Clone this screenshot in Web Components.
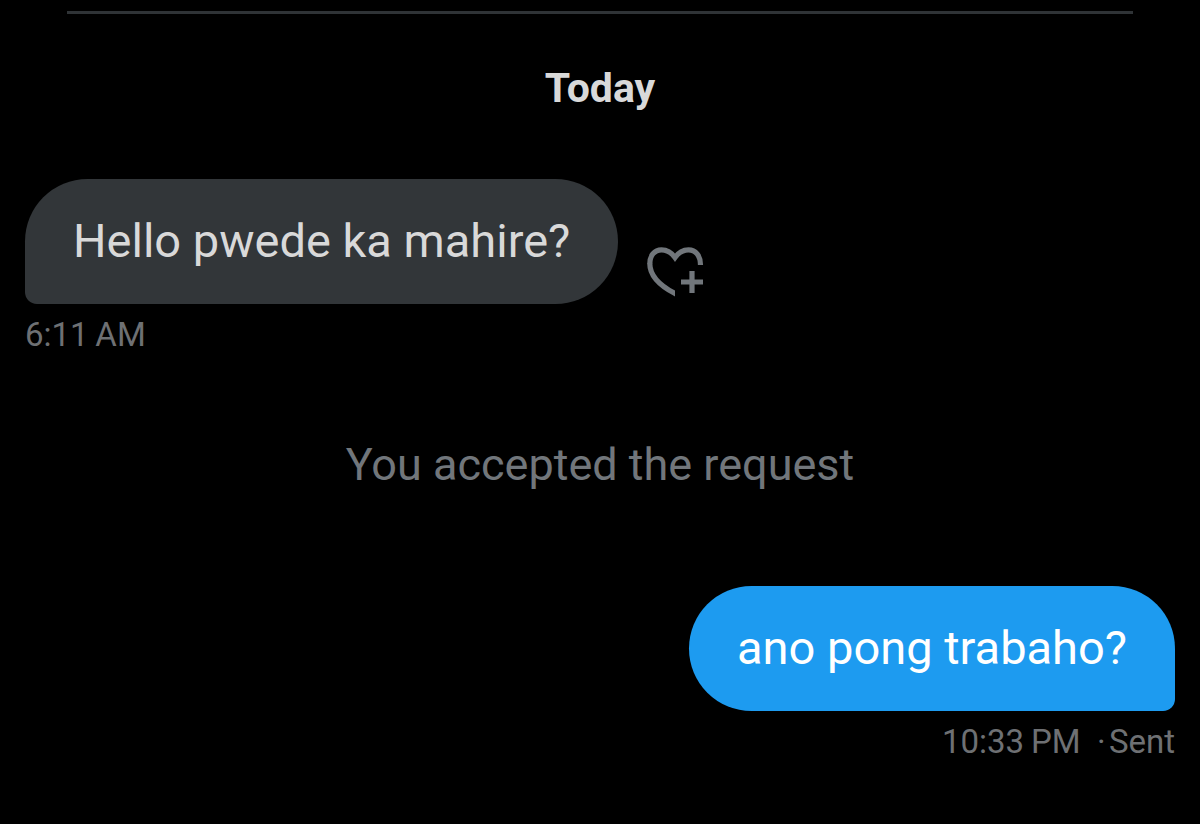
<!DOCTYPE html>
<html lang="tl">
<head>
<meta charset="utf-8">
<meta name="viewport" content="width=device-width, initial-scale=1">
<title>Messages</title>
<style>
  body { margin: 0; background: #000; font-family: Roboto, "Liberation Sans", sans-serif; color: #d9d9d9; }
</style>
</head>
<body>
<dm-thread>
  <dm-day>Today</dm-day>
  <dm-message side="in">Hello pwede ka mahire?
    <dm-react slot="action"></dm-react>
    <span slot="meta">6:11&#8201;AM</span>
  </dm-message>
  <dm-notice>You accepted the request</dm-notice>
  <dm-message side="out">ano pong trabaho?
    <span slot="meta">10:33&#8201;PM&nbsp; ·&#8202;Sent</span>
  </dm-message>
</dm-thread>
<script>
  const define = (name, html) => customElements.define(name, class extends HTMLElement {
    constructor() {
      super();
      this.attachShadow({ mode: "open" }).innerHTML = html;
    }
  });

  define("dm-thread", `
    <style>
      :host { display: block; padding: 11px 25px 48px; }
      hr { height: 3px; margin: 0 42px; border: 0; background: #2f3336; }
      .list { display: flex; flex-direction: column; }
    </style>
    <hr>
    <main class="list"><slot></slot></main>`);

  define("dm-day", `
    <style>
      :host { display: block; padding: 49px 0 66px; }
      h2 { margin: 0; font-size: 41px; line-height: 50px; font-weight: 700; text-align: center; }
    </style>
    <h2><slot></slot></h2>`);

  define("dm-notice", `
    <style>
      :host { display: block; padding: 80px 0 91px; color: #71767b; }
      p { margin: 0; font-size: 45px; line-height: 60px; text-align: center; }
    </style>
    <p><slot></slot></p>`);

  define("dm-message", `
    <style>
      :host { display: flex; flex-direction: column; align-items: flex-start; }
      :host([side="out"]) { align-items: flex-end; }
      .row { display: flex; align-items: flex-end; gap: 29px; }
      .bubble {
        margin: 0; padding: 32px 48px 33px; font-size: 47px; line-height: 60px;
        background: #323639; border-radius: 63px 63px 63px 12px;
      }
      :host([side="out"]) .bubble { background: #1d9bf0; color: #fff; border-radius: 63px 63px 12px 63px; }
      .meta { margin-top: 11px; font-size: 33px; line-height: 40px; color: #6e7073; }
    </style>
    <div class="row">
      <p class="bubble"><slot></slot></p>
      <slot name="action"></slot>
    </div>
    <div class="meta"><slot name="meta"></slot></div>`);

  define("dm-react", `
    <style>
      :host { display: block; margin-bottom: 7px; }
      button { display: block; padding: 0; border: 0; background: none; color: #71767b; }
      svg { display: block; }
    </style>
    <button type="button" aria-label="Add reaction">
      <svg width="58" height="50" viewBox="0 0 58 50" fill="none" stroke="currentColor" stroke-width="5.200">
        <clipPath id="half"><path d="M0 0H28V50H0Z"/></clipPath>
        <path d="M53.500 18C53.500 8.500 48.500 2.800 41.500 2.800C35.500 2.800 31.500 5.500 28 10.500C24.500 5.500 20.500 2.800 14.500 2.800C7.500 2.800 2.800 8.500 2.800 17"/>
        <path clip-path="url(#half)" d="M2.800 16.500C2.800 29.500 12.500 38.500 28 46.500L33 49"/>
        <path d="M34 35H56M45 24V46"/>
      </svg>
    </button>`);
</script>
</body>
</html>
